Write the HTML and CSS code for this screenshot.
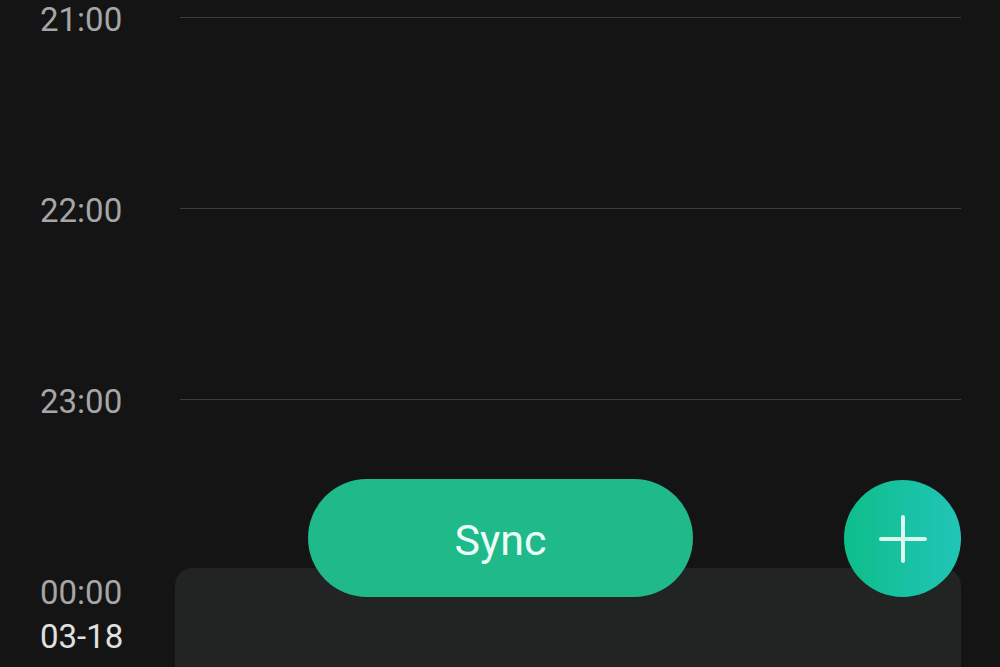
FILE: index.html
```html
<!DOCTYPE html>
<html lang="en">
<head>
    <meta charset="UTF-8">
    <meta name="viewport" content="width=device-width, initial-scale=1.0">
    <title>Schedule</title>
    <link rel="stylesheet" href="styles.css">
</head>
<body>
    <div class="screen">
        <!-- Hour rows -->
        <div class="timeline">
            <div class="hour">
                <span class="hour-label">21:00</span>
                <div class="hour-line"></div>
            </div>
            <div class="hour">
                <span class="hour-label">22:00</span>
                <div class="hour-line"></div>
            </div>
            <div class="hour">
                <span class="hour-label">23:00</span>
                <div class="hour-line"></div>
            </div>
            <div class="hour">
                <div class="day-label">
                    <span class="hour-label">00:00</span>
                    <span class="date-label">03-18</span>
                </div>
                <div class="hour-line"></div>
            </div>
        </div>

        <!-- Event card -->
        <div class="event-card"></div>

        <!-- Sync Button -->
        <button class="sync-button">Sync</button>

        <!-- Add Button -->
        <button class="add-button" aria-label="Add">
            <svg width="48" height="48" viewBox="0 0 48 48">
                <path d="M24 2 V46 M2 24 H46" stroke="#dcf7ee" stroke-width="4" stroke-linecap="round" fill="none"/>
            </svg>
        </button>
    </div>
</body>
</html>
```

FILE: styles.css
```css
/* General Styling */
body {
    margin: 0;
    padding: 0;
    background-color: #141414;
    font-family: Roboto, "Liberation Sans", Arial, sans-serif;
    overflow: hidden;
}

.screen {
    position: relative;
    width: 1000px;
    height: 667px;
    overflow: hidden;
}

/* Timeline */
.timeline {
    display: flex;
    flex-direction: column;
    gap: 157px;
}

.hour {
    display: flex;
    align-items: flex-start;
    height: 34px;
    padding: 0 39px 0 40px;
}

.hour-label {
    display: block;
    width: 140px;
    flex-shrink: 0;
    padding-top: 2px;
    line-height: 36px;
    font-size: 33px;
    color: #a6a6a6;
}

.day-label {
    display: flex;
    flex-direction: column;
    width: 140px;
    flex-shrink: 0;
    gap: 8px;
}

.date-label {
    line-height: 36px;
    font-size: 33px;
    color: #e0e0e0;
}

.hour-line {
    flex: 1;
    height: 1px;
    margin-top: 17px;
    background-color: #3c3c3c;
}

/* Event Card */
.event-card {
    position: absolute;
    left: 175px;
    right: 39px;
    top: 568px;
    height: 140px;
    background-color: #222423;
    border-radius: 18px;
}

/* Sync Button */
.sync-button {
    position: absolute;
    left: 308px;
    top: 479px;
    width: 385px;
    height: 118px;
    padding: 4px 0 0;
    border: none;
    border-radius: 59px;
    background-color: #20b98a;
    color: #eafcf5;
    font-family: Roboto, "Liberation Sans", Arial, sans-serif;
    font-size: 43px;
    cursor: pointer;
}

/* Add Button */
.add-button {
    position: absolute;
    left: 844px;
    top: 480px;
    width: 117px;
    height: 117px;
    border: none;
    border-radius: 50%;
    background: linear-gradient(90deg, #0ebe8a, #21c5b8);
    display: flex;
    justify-content: center;
    align-items: center;
    padding: 0;
    cursor: pointer;
}
```
